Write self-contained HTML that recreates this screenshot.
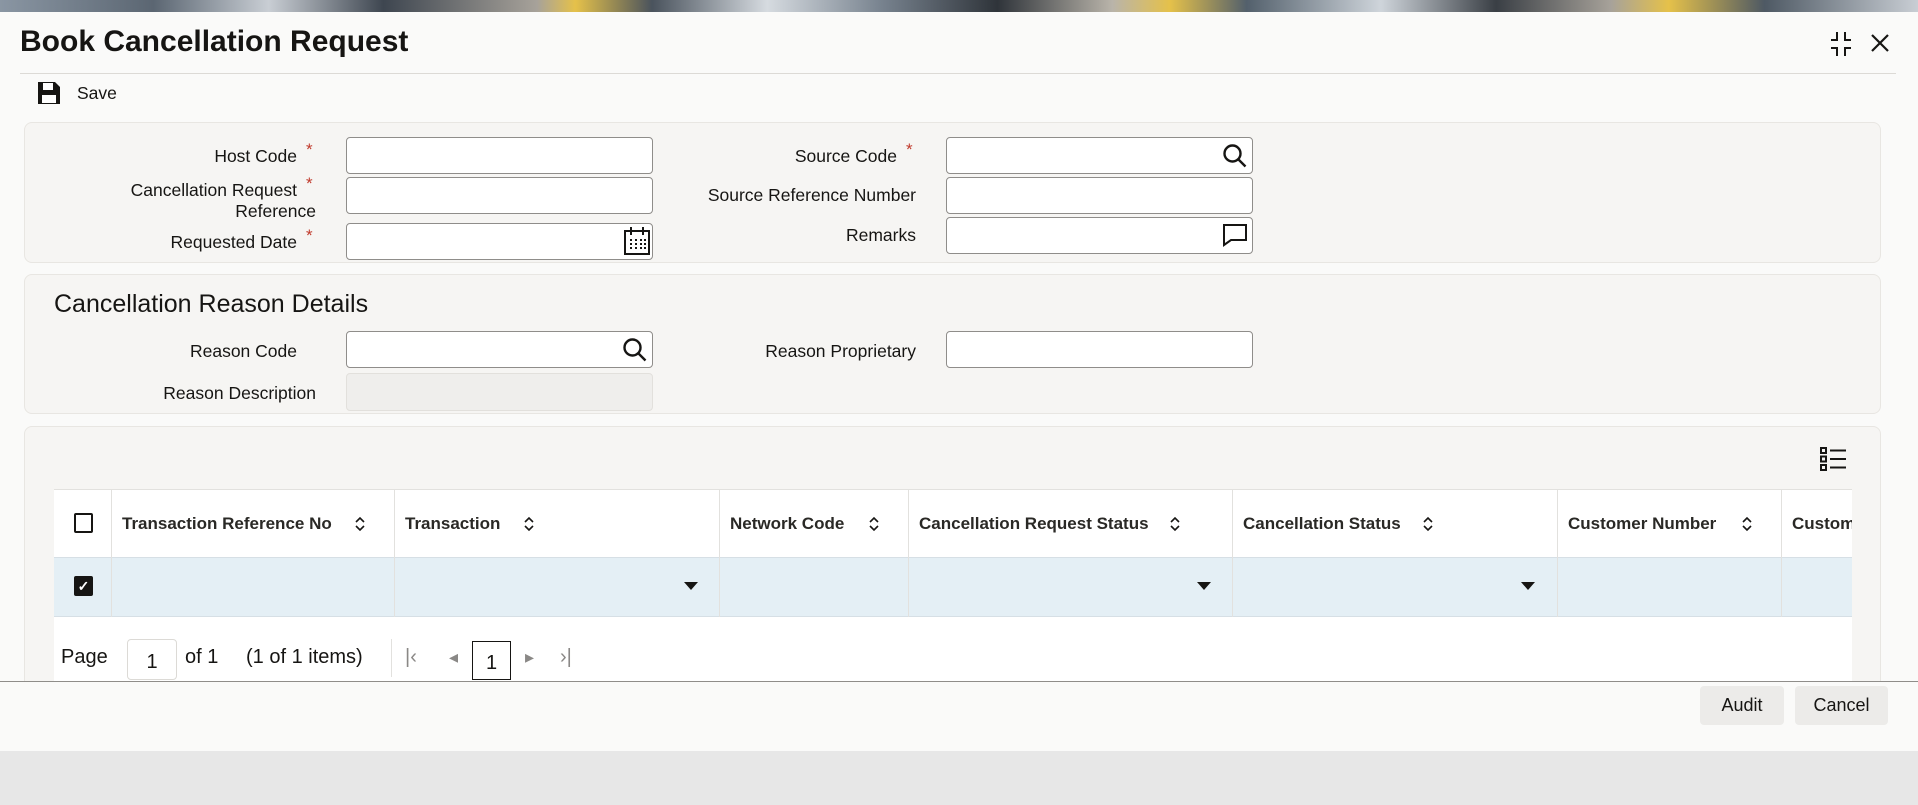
<!DOCTYPE html>
<html><head><meta charset="utf-8"><style>
*{box-sizing:border-box;margin:0;padding:0}
body{width:1918px;height:805px;position:relative;overflow:hidden;background:#fafaf9;font-family:"Liberation Sans",sans-serif;color:#161513}
.a{position:absolute}
.banner{left:0;top:0;width:1918px;height:12px;background:linear-gradient(90deg,#8a96a3 0%,#5b6672 8%,#c9ced4 14%,#3e4650 20%,#a7a29a 28%,#e5c14a 30%,#4a535d 34%,#d6dbe0 40%,#77828e 46%,#2f343a 52%,#b9b4aa 58%,#e5c14a 61%,#53606c 65%,#cfd5db 72%,#3a3f45 78%,#a7a29a 84%,#e5c14a 87%,#4e5964 92%,#c9ced4 100%)}
.panel{background:#f6f5f3;border:1px solid #e8e6e2;border-radius:8px}
.lbl{font-size:17.5px;text-align:right;width:300px}
.star{color:#c0392b;font-size:17px}
.inp{background:#fff;border:1px solid #8f8d8a;border-radius:4px;height:37px}
.th{font-size:17px;font-weight:bold;color:#2a2926;top:514px}
.vl{top:489px;width:1px;height:128px;background:#e2e1de}
.arr{width:0;height:0;border-left:7px solid transparent;border-right:7px solid transparent;border-top:8px solid #161513;top:582px}
.btn{background:#ecebe9;border-radius:4px;height:39px;font-size:18px;display:flex;align-items:center;justify-content:center;top:686px}
</style></head><body>
<div class="a banner"></div>
<div class="a" style="left:20px;top:25px;font-size:30px;font-weight:bold">Book Cancellation Request</div>
<svg class="a" style="left:1827px;top:30px" width="28" height="28" viewBox="0 0 28 28" fill="none" stroke="#161513" stroke-width="2"><path d="M10 2v8H4M18 2v8h6M10 26v-8H4M18 26v-8h6"/></svg>
<svg class="a" style="left:1869px;top:32px" width="22" height="22" viewBox="0 0 22 22" stroke="#161513" stroke-width="2.2"><path d="M3 3l16 16M19 3L3 19"/></svg>
<div class="a" style="left:20px;top:73px;width:1876px;height:1px;background:#dcdad6"></div>
<svg class="a" style="left:36px;top:80px" width="26" height="26" viewBox="0 0 26 26"><path d="M2 2h17l5 5v17H2z" fill="#161513"/><rect x="7" y="3" width="10" height="7" fill="#fff"/><rect x="6" y="15" width="14" height="8" fill="#fff"/></svg>
<div class="a" style="left:77px;top:83px;font-size:17.5px">Save</div>

<div class="a panel" style="left:24px;top:122px;width:1857px;height:141px"></div>
<div class="a lbl" style="left:-3px;top:146px">Host Code</div><div class="a star" style="left:306px;top:140px">*</div>
<div class="a lbl" style="left:-3px;top:180px">Cancellation Request</div><div class="a star" style="left:306px;top:174px">*</div>
<div class="a lbl" style="left:16px;top:201px">Reference</div>
<div class="a lbl" style="left:-3px;top:232px">Requested Date</div><div class="a star" style="left:306px;top:226px">*</div>
<div class="a inp" style="left:346px;top:137px;width:307px"></div>
<div class="a inp" style="left:346px;top:177px;width:307px"></div>
<div class="a inp" style="left:346px;top:223px;width:307px"></div>
<svg class="a" style="left:623px;top:226px" width="28" height="30" viewBox="0 0 28 30" fill="none" stroke="#161513" stroke-width="2"><rect x="2" y="5" width="24" height="23"/><path d="M8 1v8M20 1v8"/><path d="M7 14h2M12 14h2M17 14h2M7 18h2M12 18h2M17 18h2M7 22h2M12 22h2M17 22h2M21 14h2M21 18h2M21 22h2" stroke-width="2"/></svg>
<div class="a lbl" style="left:597px;top:146px">Source Code</div><div class="a star" style="left:906px;top:140px">*</div>
<div class="a lbl" style="left:616px;top:185px">Source Reference Number</div>
<div class="a lbl" style="left:616px;top:225px">Remarks</div>
<div class="a inp" style="left:946px;top:137px;width:307px"></div>
<div class="a inp" style="left:946px;top:177px;width:307px"></div>
<div class="a inp" style="left:946px;top:217px;width:307px"></div>
<svg class="a" style="left:1222px;top:143px" width="26" height="26" viewBox="0 0 26 26" fill="none" stroke="#161513" stroke-width="2.4"><circle cx="10.5" cy="10.5" r="8"/><path d="M16.5 16.5l7 7"/></svg>
<svg class="a" style="left:1222px;top:223px" width="26" height="24" viewBox="0 0 26 24" fill="none" stroke="#161513" stroke-width="2"><path d="M2 2h22v15H9l-7 5z"/></svg>

<div class="a panel" style="left:24px;top:274px;width:1857px;height:140px"></div>
<div class="a" style="left:54px;top:290px;font-size:25px">Cancellation Reason Details</div>
<div class="a lbl" style="left:-3px;top:341px">Reason Code</div>
<div class="a inp" style="left:346px;top:331px;width:307px"></div>
<svg class="a" style="left:622px;top:337px" width="26" height="26" viewBox="0 0 26 26" fill="none" stroke="#161513" stroke-width="2.4"><circle cx="10.5" cy="10.5" r="8"/><path d="M16.5 16.5l7 7"/></svg>
<div class="a lbl" style="left:16px;top:383px">Reason Description</div>
<div class="a" style="left:346px;top:373px;width:307px;height:38px;background:#efeeec;border:1px solid #e2e0dc;border-radius:4px"></div>
<div class="a lbl" style="left:616px;top:341px">Reason Proprietary</div>
<div class="a inp" style="left:946px;top:331px;width:307px"></div>

<div class="a panel" style="left:24px;top:426px;width:1857px;height:300px"></div>
<svg class="a" style="left:1819px;top:446px" width="28" height="26" viewBox="0 0 28 26" fill="none" stroke="#161513" stroke-width="2"><rect x="2" y="2" width="5" height="5"/><rect x="2" y="10.5" width="5" height="5"/><rect x="2" y="19" width="5" height="5"/><path d="M11 4.5h16M11 13h16M11 21.5h16"/></svg>
<div class="a" style="left:54px;top:489px;width:1798px;height:192px;background:#fff;border-top:1px solid #e2e1de;overflow:hidden"></div>
<div class="a" style="left:54px;top:557px;width:1798px;height:60px;background:#e4eff5;border-top:1px solid #d6dfe5;border-bottom:1px solid #d6dfe5"></div>
<div class="a vl" style="left:111px"></div><div class="a vl" style="left:394px"></div><div class="a vl" style="left:719px"></div><div class="a vl" style="left:908px"></div><div class="a vl" style="left:1232px"></div><div class="a vl" style="left:1557px"></div><div class="a vl" style="left:1781px"></div>
<div class="a" style="left:74px;top:513px;width:19px;height:20px;border:2px solid #161513;border-radius:2px"></div>
<div class="a" style="left:74px;top:576px;width:19px;height:20px;background:#161513;border-radius:2px;color:#fff;font-size:14px;font-weight:bold;text-align:center;line-height:20px">✓</div>
<div class="a th" style="left:122px">Transaction Reference No</div>
<div class="a th" style="left:405px">Transaction</div>
<div class="a th" style="left:730px">Network Code</div>
<div class="a th" style="left:919px">Cancellation Request Status</div>
<div class="a th" style="left:1243px">Cancellation Status</div>
<div class="a th" style="left:1568px">Customer Number</div>
<div class="a" style="left:1781px;top:489px;width:71px;height:68px;overflow:hidden"><div class="a th" style="left:11px;top:25px">Customer</div></div>
<svg class="a" style="left:354px;top:515px" width="12" height="18" viewBox="0 0 12 18" fill="none" stroke="#161513" stroke-width="1.6"><path d="M2 7l4-4 4 4M2 11l4 4 4-4"/></svg>
<svg class="a" style="left:523px;top:515px" width="12" height="18" viewBox="0 0 12 18" fill="none" stroke="#161513" stroke-width="1.6"><path d="M2 7l4-4 4 4M2 11l4 4 4-4"/></svg>
<svg class="a" style="left:868px;top:515px" width="12" height="18" viewBox="0 0 12 18" fill="none" stroke="#161513" stroke-width="1.6"><path d="M2 7l4-4 4 4M2 11l4 4 4-4"/></svg>
<svg class="a" style="left:1169px;top:515px" width="12" height="18" viewBox="0 0 12 18" fill="none" stroke="#161513" stroke-width="1.6"><path d="M2 7l4-4 4 4M2 11l4 4 4-4"/></svg>
<svg class="a" style="left:1422px;top:515px" width="12" height="18" viewBox="0 0 12 18" fill="none" stroke="#161513" stroke-width="1.6"><path d="M2 7l4-4 4 4M2 11l4 4 4-4"/></svg>
<svg class="a" style="left:1741px;top:515px" width="12" height="18" viewBox="0 0 12 18" fill="none" stroke="#161513" stroke-width="1.6"><path d="M2 7l4-4 4 4M2 11l4 4 4-4"/></svg>
<div class="a arr" style="left:684px"></div><div class="a arr" style="left:1197px"></div><div class="a arr" style="left:1521px"></div>
<div class="a" style="left:61px;top:646px;font-size:20px">Page</div>
<div class="a" style="left:127px;top:639px;width:50px;height:41px;border:1px solid #dcdad6;border-radius:4px;background:#fff;font-size:20px;text-align:center;line-height:44px">1</div>
<div class="a" style="left:185px;top:646px;font-size:20px">of 1</div>
<div class="a" style="left:246px;top:646px;font-size:20px">(1 of 1 items)</div>
<div class="a" style="left:391px;top:639px;width:1px;height:38px;background:#e2e1de"></div>
<div class="a" style="left:405px;top:646px;font-size:20px;color:#8a8886">|‹</div>
<div class="a" style="left:449px;top:647px;font-size:18px;color:#8a8886">◂</div>
<div class="a" style="left:472px;top:641px;width:39px;height:39px;border:1.5px solid #161513;font-size:20px;text-align:center;line-height:42px;background:#fff">1</div>
<div class="a" style="left:525px;top:647px;font-size:18px;color:#8a8886">▸</div>
<div class="a" style="left:560px;top:646px;font-size:20px;color:#8a8886">›|</div>
<div class="a" style="left:0;top:681px;width:1918px;height:1px;background:#8f8d8a"></div>
<div class="a" style="left:0;top:682px;width:1918px;height:69px;background:#fafaf9"></div>
<div class="a btn" style="left:1700px;width:84px">Audit</div>
<div class="a btn" style="left:1795px;width:93px">Cancel</div>
<div class="a" style="left:0;top:751px;width:1918px;height:54px;background:#e7e7e7"></div>
</body></html>
